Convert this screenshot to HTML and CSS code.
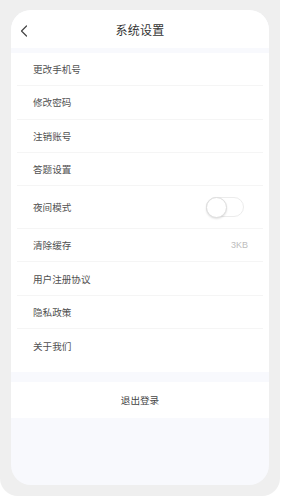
FILE: index.html
```html
<!DOCTYPE html>
<html lang="zh">
<head>
<meta charset="utf-8">
<title>系统设置</title>
<link rel="stylesheet" href="styles.css">
</head>
<body>
<div class="frame">
  <div class="card">
    <div class="header">
      <svg class="back" width="8" height="12" viewBox="0 0 8 12"><polyline points="6.5,1 1.5,6 6.5,11" fill="none" stroke="#444" stroke-width="1.2" stroke-linecap="round" stroke-linejoin="round"/></svg>
      <div class="title">系统设置</div>
    </div>
    <div class="list">
      <div class="row"><span>更改手机号</span></div>
      <div class="row"><span>修改密码</span></div>
      <div class="row"><span>注销账号</span></div>
      <div class="row"><span>答题设置</span></div>
      <div class="row tall"><span>夜间模式</span><span class="toggle"><span class="knob"></span></span></div>
      <div class="row"><span>清除缓存</span><span class="value">3KB</span></div>
      <div class="row"><span>用户注册协议</span></div>
      <div class="row"><span>隐私政策</span></div>
      <div class="row last"><span>关于我们</span></div>
    </div>
    <div class="logout">退出登录</div>
  </div>
</div>
</body>
</html>
```
FILE: styles.css
```css
html, body {
  margin: 0;
  padding: 0;
  background: #ffffff;
}
body {
  font-family: "Noto Sans CJK SC", "Noto Sans", sans-serif;
}
.frame {
  width: 280px;
  height: 496px;
  box-sizing: border-box;
  padding: 10px 11px 11px 11px;
  background: #efefef;
  border-radius: 0 0 18px 18px;
}
.card {
  height: 100%;
  background: #f8f9fd;
  border-radius: 20px;
  overflow: hidden;
  display: flex;
  flex-direction: column;
}
.header {
  position: relative;
  height: 38px;
  background: #ffffff;
  display: flex;
  align-items: center;
  justify-content: center;
}
.back {
  position: absolute;
  left: 9px;
  top: 15px;
}
.title {
  font-size: 12px;
  color: #333333;
  letter-spacing: 0.2px;
}
.list {
  margin-top: 5px;
  background: #ffffff;
  padding-bottom: 10px;
}
.row {
  height: 33.3px;
  margin: 0 6px;
  padding: 0 15px 0 16px;
  display: flex;
  align-items: center;
  justify-content: space-between;
  border-bottom: 1px solid #f5f5f5;
  box-sizing: border-box;
  font-size: 9.6px;
  color: #505050;
}
.row.tall {
  height: 43px;
}
.row.last {
  border-bottom: none;
}
.value {
  font-family: "Liberation Sans", sans-serif;
  font-size: 9px;
  color: #bdbdbd;
}
.toggle {
  width: 38px;
  height: 20px;
  margin-right: 4px;
  border-radius: 11px;
  border: 1px solid #ececec;
  background: #ffffff;
  display: flex;
  align-items: center;
  box-sizing: border-box;
}
.knob {
  width: 21px;
  height: 21px;
  margin-left: -1px;
  border-radius: 50%;
  background: #ffffff;
  border: 1px solid #dddddd;
  box-shadow: 0 1px 2px rgba(0,0,0,0.12);
  box-sizing: border-box;
}
.logout {
  margin-top: 10px;
  height: 36px;
  background: #ffffff;
  display: flex;
  align-items: center;
  justify-content: center;
  font-size: 9.6px;
  color: #444444;
}
```
